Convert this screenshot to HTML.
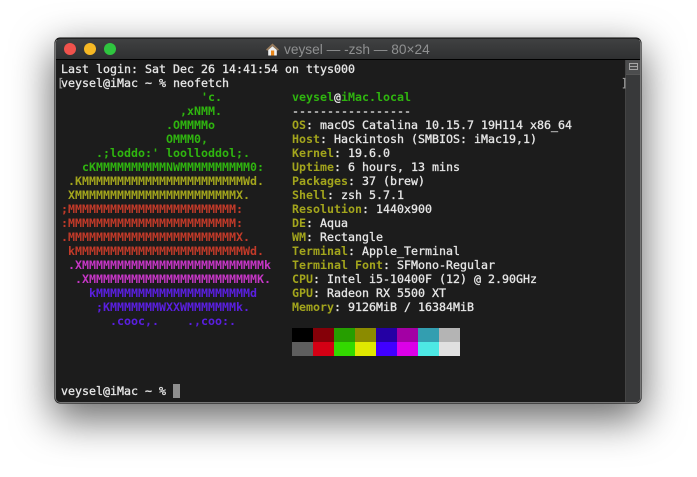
<!DOCTYPE html>
<html><head><meta charset="utf-8">
<style>
html,body{margin:0;padding:0;background:#fff;width:697px;height:477px;overflow:hidden}
#win{position:absolute;left:55px;top:38px;width:586px;height:365px;box-sizing:border-box;border-radius:5px;background:#1c1c1c;box-shadow:0 14px 40px 3px rgba(0,0,0,.58),0 0 0 .5px #000;overflow:hidden;border:1px solid #777;border-top-color:#222;}
#tb{position:absolute;left:0;top:0;right:0;height:20px;background:linear-gradient(#404142,#2f3031);border-bottom:1px solid #000}
.d{position:absolute;top:4px;width:12px;height:12px;border-radius:50%}
#title{position:absolute;left:228px;top:2px;font:13.7px/17px "Liberation Sans",sans-serif;color:#8f9091;white-space:pre}
#sb{position:absolute;left:569px;top:21px;width:16px;bottom:0;background:#38393a;border-left:1px solid #444}
#btn{position:absolute;left:0;top:0;width:16px;height:14px;background:#4c4d4e;border-bottom:1px solid #555}
#btn i{position:absolute;left:3px;top:3px;width:7px;height:5px;border:1px solid #a5a5a5;}
#btn b{position:absolute;left:3px;top:6px;width:8px;height:1px;background:#a5a5a5}
.l{position:absolute;font:400 11.63px/14px "DejaVu Sans Mono",monospace;color:#e6e6e6;white-space:pre;-webkit-text-stroke:.3px currentColor}
.g,.y,.r,.m,.b{font-weight:bold;-webkit-text-stroke:0}
.g{color:#2fb50f}.y{color:#a3a51c}.r{color:#c23a29}.m{color:#c636c6}.b{color:#5a1fe0}
.s{position:absolute;width:21px;height:14px}
#cur{position:absolute;left:173px;top:384px;width:7px;height:14px;background:#8e8e8e}
</style></head><body>
<div id="win">
<div id="tb">
<div class="d" style="left:8px;background:#f0524c"></div>
<div class="d" style="left:28px;background:#f6b824"></div>
<div class="d" style="left:48px;background:#2fc53f"></div>
<svg style="position:absolute;left:210px;top:4px" width="13" height="13" viewBox="0 0 13 13"><path d="M6.5 .5L0 6.5 1.2 7.8 6.5 3 11.8 7.8 13 6.5Z" fill="#96795a"/><path d="M2.2 7L6.5 3.2 10.8 7V12.5H2.2Z" fill="#f0f0f0"/><rect x="5" y="7.5" width="3.2" height="5" fill="#e8861a"/></svg>
<div id="title">veysel — -zsh — 80×24</div>
</div>
<div id="sb"><div id="btn"><i></i><b></b></div></div>
</div>
<div id="cur"></div>
<div id="t">
<div class="l" style="left:61px;top:62px">Last login: Sat Dec 26 14:41:54 on ttys000</div>
<div class="l" style="left:57px;top:76px;color:#999">[</div>
<div class="l" style="left:61px;top:76px">veysel@iMac ~ % neofetch</div>
<div class="l" style="left:621px;top:76px;color:#999">]</div>
<div class="l g" style="left:61px;top:90px">                    'c.</div>
<div class="l g" style="left:61px;top:104px">                 ,xNMM.</div>
<div class="l g" style="left:61px;top:118px">               .OMMMMo</div>
<div class="l g" style="left:61px;top:132px">               OMMM0,</div>
<div class="l g" style="left:61px;top:146px">     .;loddo:' loolloddol;.</div>
<div class="l g" style="left:61px;top:160px">   cKMMMMMMMMMMNWMMMMMMMMMM0:</div>
<div class="l y" style="left:61px;top:174px"> .KMMMMMMMMMMMMMMMMMMMMMMMWd.</div>
<div class="l y" style="left:61px;top:188px"> XMMMMMMMMMMMMMMMMMMMMMMMX.</div>
<div class="l r" style="left:61px;top:202px">;MMMMMMMMMMMMMMMMMMMMMMMM:</div>
<div class="l r" style="left:61px;top:216px">:MMMMMMMMMMMMMMMMMMMMMMMM:</div>
<div class="l r" style="left:61px;top:230px">.MMMMMMMMMMMMMMMMMMMMMMMMX.</div>
<div class="l r" style="left:61px;top:244px"> kMMMMMMMMMMMMMMMMMMMMMMMMWd.</div>
<div class="l m" style="left:61px;top:258px"> .XMMMMMMMMMMMMMMMMMMMMMMMMMMk</div>
<div class="l m" style="left:61px;top:272px">  .XMMMMMMMMMMMMMMMMMMMMMMMMK.</div>
<div class="l b" style="left:61px;top:286px">    kMMMMMMMMMMMMMMMMMMMMMMd</div>
<div class="l b" style="left:61px;top:300px">     ;KMMMMMMMWXXWMMMMMMMk.</div>
<div class="l b" style="left:61px;top:314px">       .cooc,.    .,coo:.</div>
<div class="l" style="left:292px;top:90px;font-weight:bold;-webkit-text-stroke:0"><span class="g">veysel</span>@<span class="g">iMac.local</span></div>
<div class="l" style="left:292px;top:104px">-----------------</div>
<div class="l" style="left:292px;top:118px"><span class="y">OS</span>: macOS Catalina 10.15.7 19H114 x86_64</div>
<div class="l" style="left:292px;top:132px"><span class="y">Host</span>: Hackintosh (SMBIOS: iMac19,1)</div>
<div class="l" style="left:292px;top:146px"><span class="y">Kernel</span>: 19.6.0</div>
<div class="l" style="left:292px;top:160px"><span class="y">Uptime</span>: 6 hours, 13 mins</div>
<div class="l" style="left:292px;top:174px"><span class="y">Packages</span>: 37 (brew)</div>
<div class="l" style="left:292px;top:188px"><span class="y">Shell</span>: zsh 5.7.1</div>
<div class="l" style="left:292px;top:202px"><span class="y">Resolution</span>: 1440x900</div>
<div class="l" style="left:292px;top:216px"><span class="y">DE</span>: Aqua</div>
<div class="l" style="left:292px;top:230px"><span class="y">WM</span>: Rectangle</div>
<div class="l" style="left:292px;top:244px"><span class="y">Terminal</span>: Apple_Terminal</div>
<div class="l" style="left:292px;top:258px"><span class="y">Terminal Font</span>: SFMono-Regular</div>
<div class="l" style="left:292px;top:272px"><span class="y">CPU</span>: Intel i5-10400F (12) @ 2.90GHz</div>
<div class="l" style="left:292px;top:286px"><span class="y">GPU</span>: Radeon RX 5500 XT</div>
<div class="l" style="left:292px;top:300px"><span class="y">Memory</span>: 9126MiB / 16384MiB</div>
<div class="l" style="left:61px;top:384px">veysel@iMac ~ %</div>
</div>
<div class="s" style="left:292px;top:328px;background:#000"></div>
<div class="s" style="left:313px;top:328px;background:#850008"></div>
<div class="s" style="left:334px;top:328px;background:#269e00"></div>
<div class="s" style="left:355px;top:328px;background:#8b8b00"></div>
<div class="s" style="left:376px;top:328px;background:#2400a4"></div>
<div class="s" style="left:397px;top:328px;background:#a300a4"></div>
<div class="s" style="left:418px;top:328px;background:#339eb0"></div>
<div class="s" style="left:439px;top:328px;background:#b4b4b4"></div>
<div class="s" style="left:292px;top:342px;background:#5e5e5e"></div>
<div class="s" style="left:313px;top:342px;background:#d40014"></div>
<div class="s" style="left:334px;top:342px;background:#33d900"></div>
<div class="s" style="left:355px;top:342px;background:#e0e800"></div>
<div class="s" style="left:376px;top:342px;background:#4000ff"></div>
<div class="s" style="left:397px;top:342px;background:#dc00e8"></div>
<div class="s" style="left:418px;top:342px;background:#4de8e4"></div>
<div class="s" style="left:439px;top:342px;background:#e0e0e0"></div>
</body></html>
